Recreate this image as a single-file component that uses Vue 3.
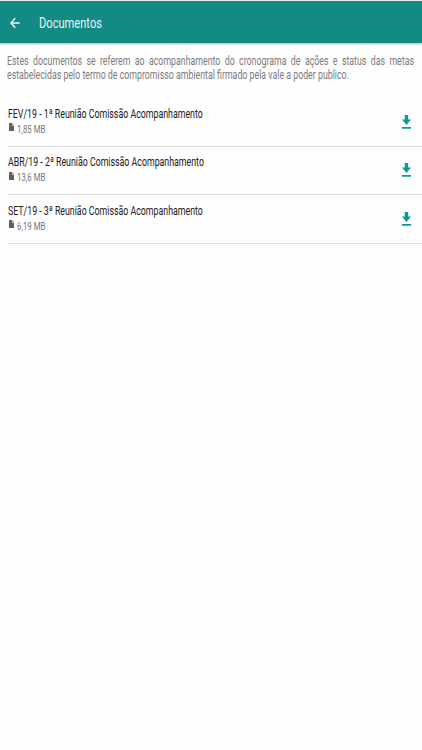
<script setup>
const documents = [
  { title: 'FEV/19 - 1ª Reunião Comissão Acompanhamento', size: '1,85 MB' },
  { title: 'ABR/19 - 2ª Reunião Comissão Acompanhamento', size: '13,6 MB' },
  { title: 'SET/19 - 3ª Reunião Comissão Acompanhamento', size: '6,19 MB' },
]
</script>

<template>
  <div class="screen">
    <header class="bar">
      <svg class="back" viewBox="0 0 10 12" aria-hidden="true">
        <path d="M9.6 6H1M5.2 1.2L.9 6l4.3 4.8" />
      </svg>
      <h1 class="heading condensed">Documentos</h1>
    </header>
    <main>
      <p class="intro condensed">Estes documentos se referem ao acompanhamento do cronograma de ações e status das metas estabelecidas pelo termo de compromisso ambiental firmado pela vale a poder publico.</p>
      <ul class="list">
        <li v-for="doc in documents" :key="doc.title" class="row">
          <div class="info">
            <div class="title condensed">{{ doc.title }}</div>
            <div class="meta">
              <svg class="file" viewBox="0 0 5 8" aria-hidden="true">
                <path d="M.5 0H3v3h2v4.5a.5.5 0 0 1-.5.5h-4a.5.5 0 0 1-.5-.5v-7A.5.5 0 0 1 .5 0zM3.5 0L5 2.4H3.5z" />
              </svg>
              <span class="size condensed">{{ doc.size }}</span>
            </div>
          </div>
          <svg class="download" viewBox="0 0 9 14" aria-hidden="true">
            <path d="M2.8 0h3.4v4.5H9L4.5 10 0 4.5h2.8zM0 12h9v1.7H0z" />
          </svg>
        </li>
      </ul>
    </main>
  </div>
</template>

<style>
body {
  margin: 0;
  background: #fefefe;
}
</style>

<style scoped>
.screen {
  box-sizing: border-box;
  height: 750px;
  overflow: hidden;
  border-top: 1px solid #e4eeed;
  background: #fefefe;
  font-family: Roboto, sans-serif;
}
.condensed {
  transform: scaleX(0.732);
  transform-origin: 0 50%;
  white-space: nowrap;
}
.bar {
  display: flex;
  align-items: center;
  box-sizing: border-box;
  height: 42px;
  padding-left: 9.5px;
  background: #128b85;
  box-shadow: 0 1px 2px rgba(0, 0, 0, 0.3);
}
.back {
  width: 10px;
  height: 12px;
  margin-top: 1px;
  margin-right: 19px;
  fill: none;
  stroke: #f4fbfa;
  stroke-width: 1.4;
}
.heading {
  margin: 1px 0 0;
  color: #e8f5f4;
  font-size: 15.2px;
  font-weight: 400;
  line-height: 20px;
}
.intro {
  width: 556px;
  margin: 11px 0 0 7px;
  color: #7c7c7c;
  font-size: 12.03px;
  line-height: 14px;
  text-align: justify;
  white-space: normal;
}
.list {
  margin: 16px 0 0;
  padding: 0 0 0 8px;
  list-style: none;
}
.row {
  display: flex;
  justify-content: space-between;
  box-sizing: border-box;
  height: 48.5px;
  padding: 7.6px 11.5px 0 0;
  border-bottom: 1px solid #e0e0e0;
}
.info {
  width: 280px;
}
.title {
  color: #202020;
  font-size: 12.03px;
  line-height: 16px;
}
.meta {
  display: flex;
  align-items: center;
  height: 14px;
  margin-top: 1px;
}
.file {
  width: 5px;
  height: 8px;
  margin: -5px 3px 0 1px;
  fill: #606060;
}
.size {
  color: #777;
  font-size: 10.7px;
  line-height: 14px;
}
.download {
  width: 9px;
  height: 14px;
  margin-top: 9px;
  fill: #0797a4;
}
</style>
